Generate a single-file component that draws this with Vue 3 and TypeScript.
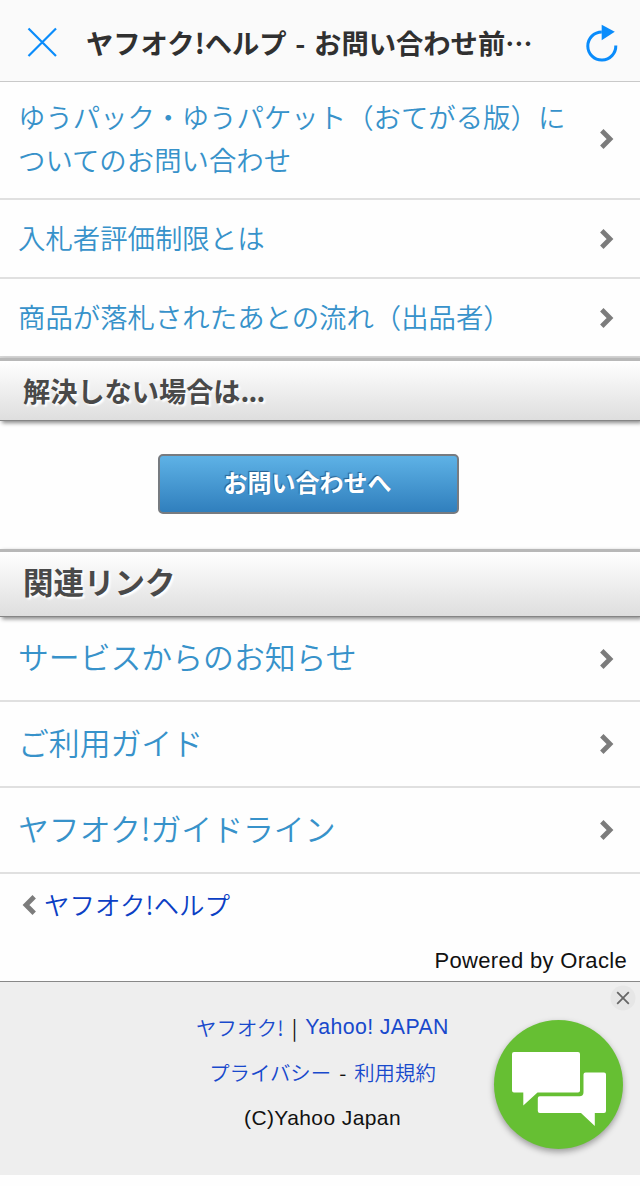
<script setup lang="ts">
interface LinkItem {
  label: string
  tall?: boolean
}

const questions: LinkItem[] = [
  { label: 'ゆうパック・ゆうパケット（おてがる版）についてのお問い合わせ', tall: true },
  { label: '入札者評価制限とは' },
  { label: '商品が落札されたあとの流れ（出品者）' },
]

const related: LinkItem[] = [
  { label: 'サービスからのお知らせ' },
  { label: 'ご利用ガイド' },
  { label: 'ヤフオク!ガイドライン' },
]
</script>

<template>
  <div class="page">
    <header class="navbar">
      <svg class="close" viewBox="0 0 30 30" width="30" height="30">
        <path d="M1.5 1.5 29 29M29 1.5 1.5 29" fill="none" stroke="#0a8cfb" stroke-width="2.2" />
      </svg>
      <h1 class="title">ヤフオク!ヘルプ - お問い合わせ前…</h1>
      <svg class="reload" viewBox="0 0 34 40" width="34" height="40">
        <path d="M15.8 10A14 14 0 1 0 29.8 23.5" fill="none" stroke="#0a8cfb" stroke-width="3" />
        <path d="M15.7 2.8 28.8 9.7 15.7 18.2z" fill="#0a8cfb" />
      </svg>
    </header>

    <ul class="list">
      <li v-for="q in questions" :key="q.label" class="row" :class="{ tall: q.tall }">
        <a class="label">{{ q.label }}</a>
        <svg class="chevron" viewBox="0 0 16 22" width="16" height="22">
          <path d="M2.8 2.8 11 11 2.8 19.2" fill="none" stroke="#7c7c7c" stroke-width="4.8" />
        </svg>
      </li>
    </ul>

    <h2 class="bar first"><span>解決しない場合は<span class="dots">...</span></span></h2>
    <div class="contact">
      <button class="button" type="button">お問い合わせへ</button>
    </div>
    <h2 class="bar second"><span>関連リンク</span></h2>

    <ul class="list large">
      <li v-for="r in related" :key="r.label" class="row">
        <a class="label">{{ r.label }}</a>
        <svg class="chevron" viewBox="0 0 16 22" width="16" height="22">
          <path d="M2.8 2.8 11 11 2.8 19.2" fill="none" stroke="#7c7c7c" stroke-width="4.8" />
        </svg>
      </li>
    </ul>

    <div class="back">
      <svg viewBox="0 0 16 22" width="16" height="22">
        <path d="M13.2 2.8 5 11 13.2 19.2" fill="none" stroke="#7c7c7c" stroke-width="4.8" />
      </svg>
      <a>ヤフオク!ヘルプ</a>
    </div>
    <div class="powered"><span>Powered by Oracle</span></div>

    <footer class="footer">
      <p class="line one"><a>ヤフオク!</a><i>|</i><a class="latin">Yahoo! JAPAN</a></p>
      <p class="line two"><a>プライバシー</a><i>-</i><a>利用規約</a></p>
      <p class="line three latin">(C)Yahoo Japan</p>
      <svg class="dismiss" viewBox="0 0 26 26" width="26" height="26">
        <circle cx="13" cy="13" r="12.5" fill="#e6e6e6" />
        <path d="M7.2 7.2 18.8 18.8M18.8 7.2 7.2 18.8" fill="none" stroke="#666" stroke-width="1.8" />
      </svg>
      <div class="chat">
        <svg viewBox="0 0 129 129" width="129" height="129">
          <path
            d="M20 32H84a2 2 0 0 1 2 2V70.5a2 2 0 0 1-2 2H43.5L29.3 85.5V72.5H20a2 2 0 0 1-2-2V34a2 2 0 0 1 2-2z"
            fill="#fff"
          />
          <path
            d="M91.5 52.5h18.500a2 2 0 0 1 2 2V91a2 2 0 0 1-2 2H100.800V106L87 93H45.800a2 2 0 0 1-2-2V78.300a2 2 0 0 1 2-2H85.500a4 4 0 0 0 4-4V54.500a2 2 0 0 1 2-2z"
            fill="#fff"
          />
        </svg>
      </div>
    </footer>
  </div>
</template>

<style>
body {
  background: #fff;
}
</style>

<style scoped>
.page {
  width: 640px;
  height: 1186px;
  overflow: hidden;
  background: #fefefe;
  color: #111;
  font-family: "Noto Sans CJK JP", "Noto Sans", sans-serif;
  display: flex;
  flex-direction: column;
}
.page > * {
  flex: none;
}
.page,
.page * {
  box-sizing: border-box;
}
.navbar {
  height: 82px;
  background: #fafafa;
  border-bottom: 1px solid #c9c9c9;
  display: flex;
  align-items: center;
  padding: 3px 20px 0 27px;
}
.title {
  flex: 1;
  margin: 0 0 0 29px;
  font-size: 27.3px;
  font-weight: 600;
  line-height: 40px;
  color: #303030;
  white-space: nowrap;
  word-spacing: 2.5px;
}
.list {
  list-style: none;
  margin: 0;
  padding: 0;
}
.row {
  height: 79px;
  display: flex;
  align-items: center;
  justify-content: space-between;
  padding: 0 25px 0 18px;
  border-bottom: 2px solid #e0e0e0;
}
.row.tall {
  height: 118px;
  padding-bottom: 3px;
}
.row:last-child {
  border-bottom-color: #d6d6d6;
}
.label {
  width: 570px;
  padding-bottom: 2px;
  font-size: 27.4px;
  font-weight: 350;
  line-height: 43px;
  color: #3792ca;
}
.large .row {
  height: 86px;
}
.large .row:first-child {
  height: 85px;
}
.large .row:last-child {
  border-bottom-color: #e0e0e0;
}
.large .label {
  font-size: 30.85px;
  padding-bottom: 6px;
}
.bar {
  margin: 0;
  padding-left: 23px;
  display: flex;
  align-items: center;
  background: linear-gradient(#fff, #dedede);
  border-bottom: 1px solid #858585;
  border-top: 3px solid #b8b8b8;
  box-shadow: 2px 2px 4px #888;
  color: #494949;
  font-weight: 600;
  text-shadow: 2px 2px 2px #fff;
}
.first {
  height: 63px;
  padding-bottom: 1px;
  font-size: 27.2px;
}
.dots {
  letter-spacing: -0.9px;
}
.second {
  height: 68px;
  padding-bottom: 6px;
  font-size: 30.5px;
}
.contact {
  height: 128px;
  padding: 33px 0 0 158px;
}
.button {
  width: 301px;
  height: 60px;
  border: 2px solid #777b80;
  border-radius: 5px;
  background: linear-gradient(#5eb2e6, #307fbd);
  color: #fff;
  font: 600 24px/50px "Noto Sans CJK JP", sans-serif;
  padding: 0 2px 5px 0;
  text-shadow: -1px -1px 1px #285f8d;
}
.back {
  height: 62px;
  display: flex;
  align-items: center;
  gap: 7px;
  padding: 0 0 0 21px;
  color: #0b3fc4;
  font-size: 25.5px;
  line-height: 40px;
}
.back a {
  font-weight: 350;
  padding-bottom: 2px;
}
.powered {
  height: 45px;
  padding: 9px 13px 0 0;
  text-align: right;
  font-family: "Liberation Sans", Arial, sans-serif;
  font-size: 22px;
  letter-spacing: 0.32px;
  line-height: 32px;
}
.footer {
  position: relative;
  height: 194px;
  background: #eee;
  border-top: 1px solid #888;
  padding: 23px 0 0 5px;
  font-size: 20.4px;
}
.line {
  margin: 0;
  height: 45px;
  line-height: 45px;
  display: flex;
  justify-content: center;
  color: #111;
  white-space: pre;
}
.line a {
  color: #1849cc;
  font-weight: 350;
}
.line i {
  font-style: normal;
  margin: 0 8px;
}
.latin {
  font-family: "Liberation Sans", Arial, sans-serif;
  font-size: 21.3px;
  letter-spacing: 0.4px;
}
.three {
  font-size: 21px;
}
.dismiss {
  position: absolute;
  right: 4px;
  top: 3px;
}
.chat {
  position: absolute;
  left: 494px;
  top: 38px;
  width: 129px;
  height: 129px;
  border-radius: 50%;
  background: #66bf33;
  box-shadow: 0 3px 6px rgba(0, 0, 0, 0.35);
}
.chat svg {
  display: block;
}
</style>
